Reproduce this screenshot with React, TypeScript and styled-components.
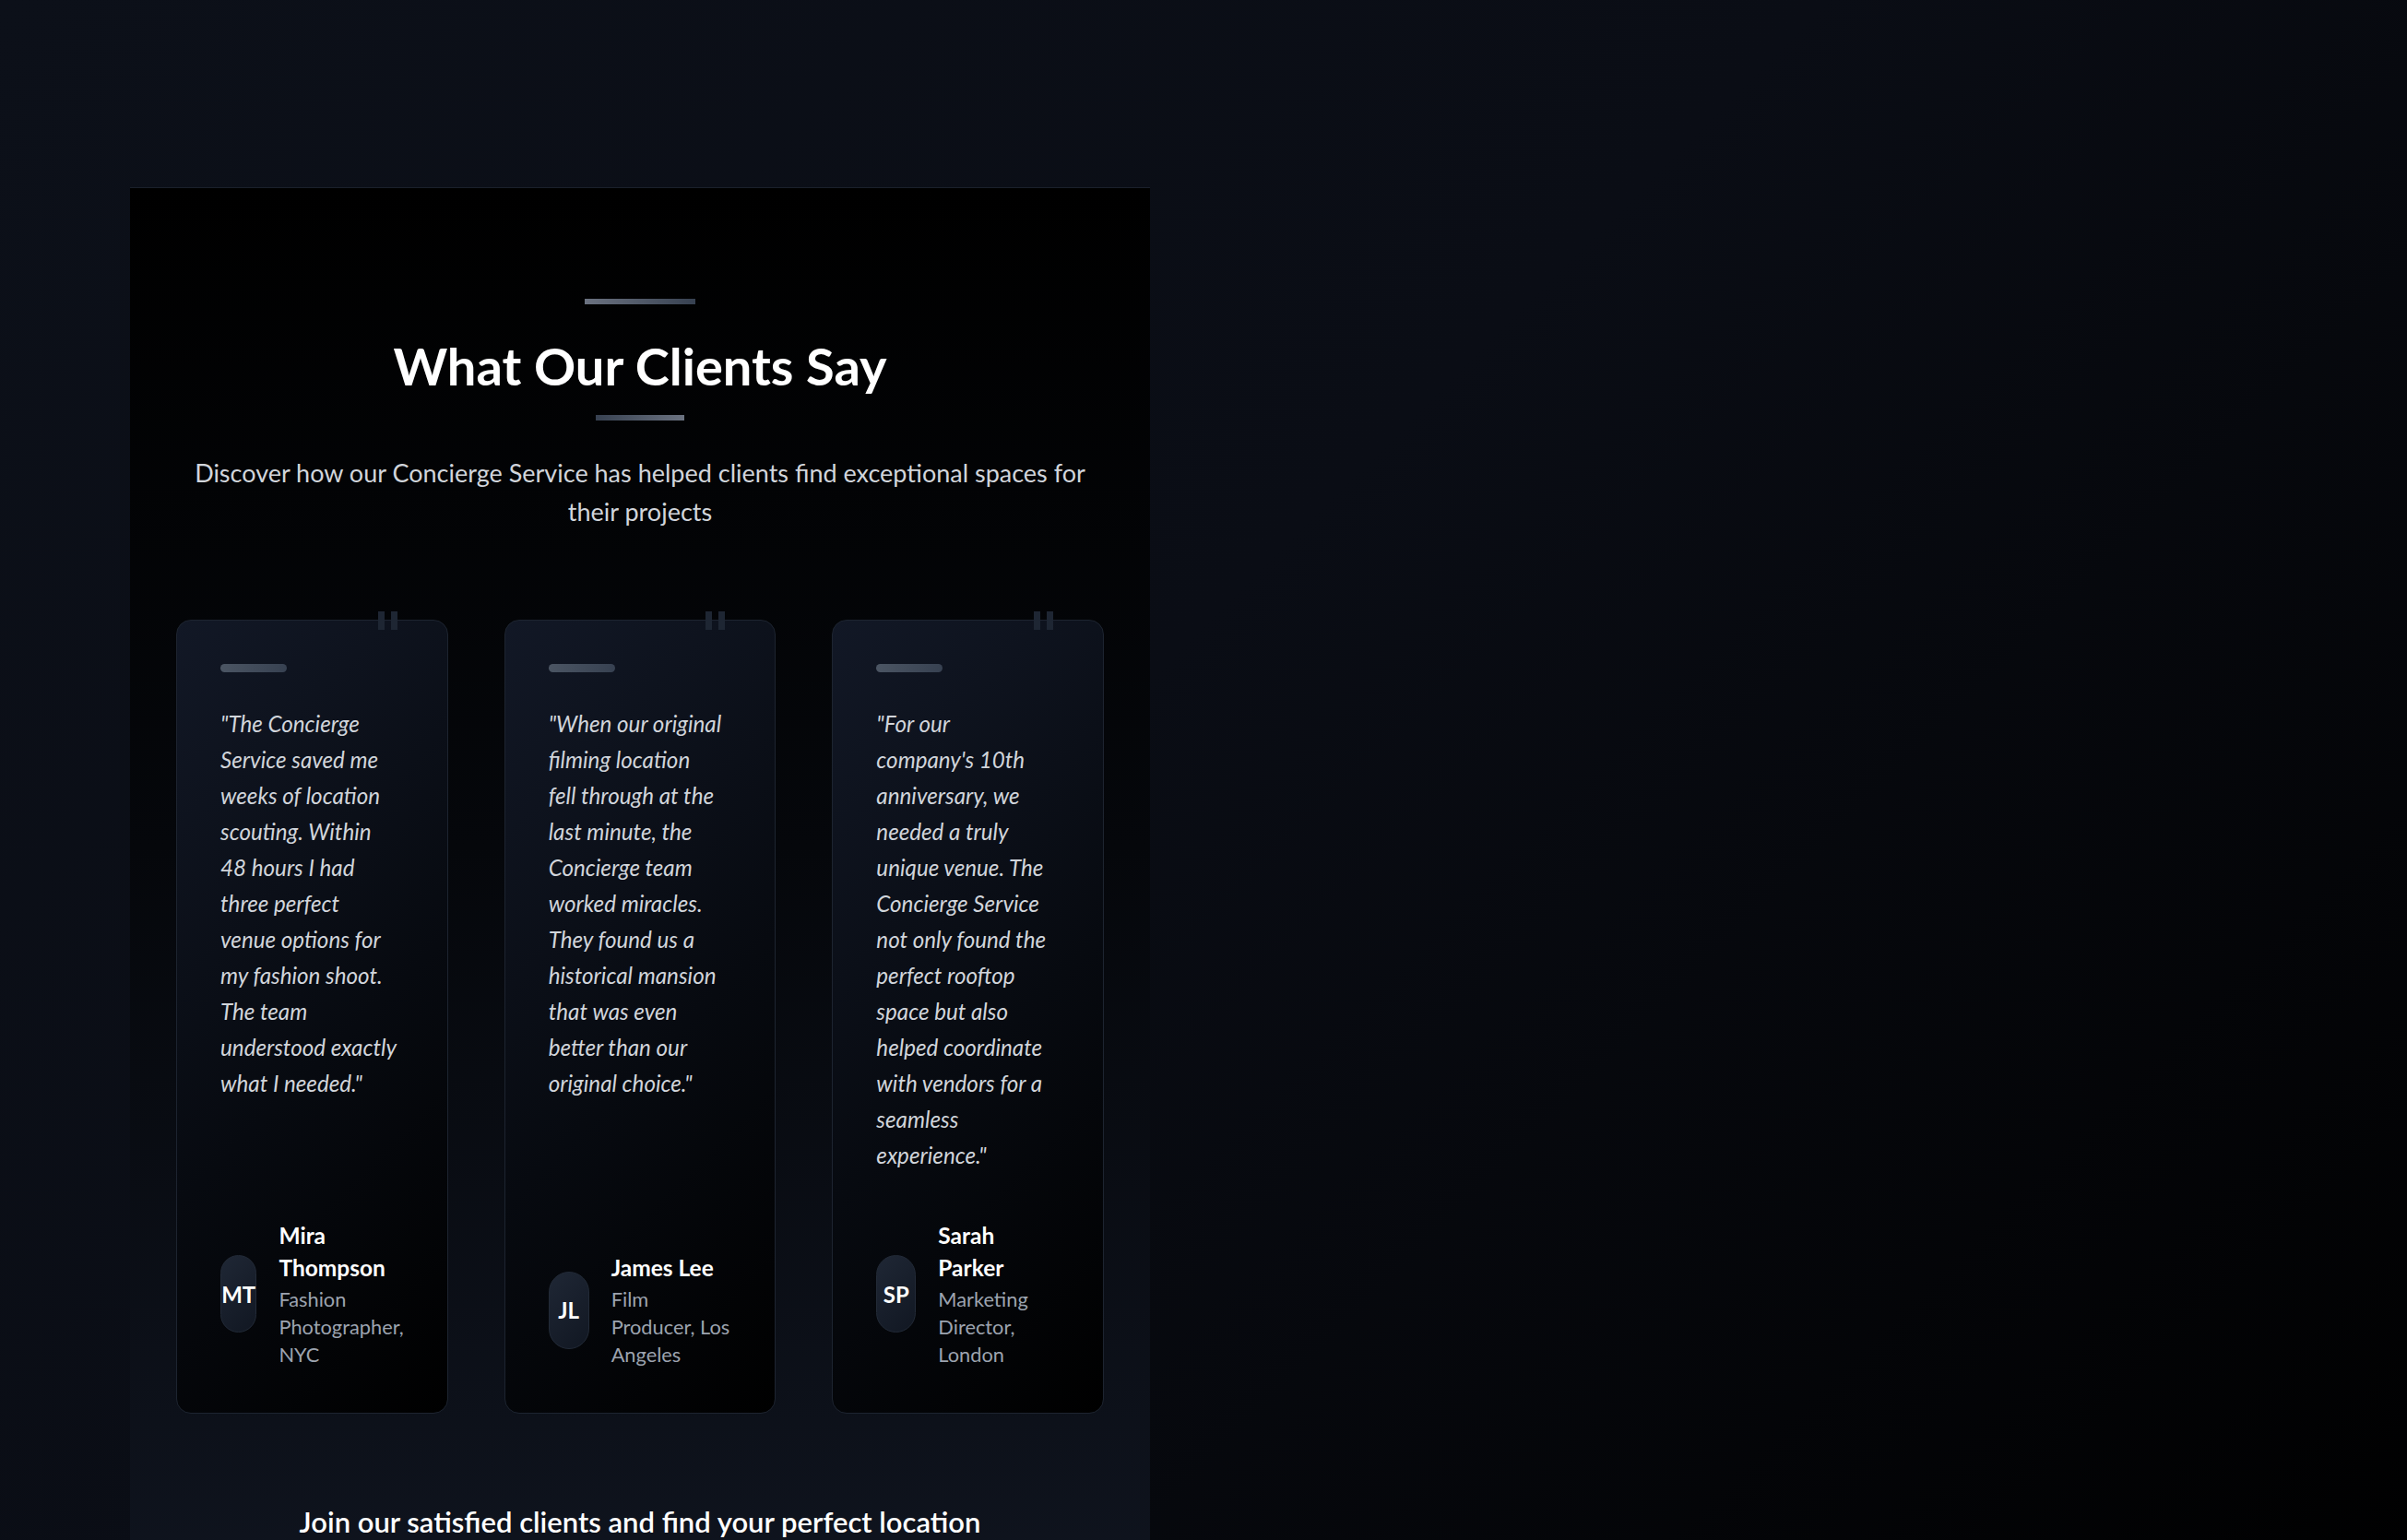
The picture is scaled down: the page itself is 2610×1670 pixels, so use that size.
import React from "react";
import styled, { createGlobalStyle } from "styled-components";

const GlobalStyle = createGlobalStyle`
  *, *::before, *::after { box-sizing: border-box; }
  html, body { margin: 0; padding: 0; }
  body {
    min-height: 100vh;
    background: linear-gradient(135deg, #0c1019 0%, #0a0d15 45%, #000000 100%);
    font-family: "Lato", "Open Sans", "Liberation Sans", sans-serif;
    color: #ffffff;
  }
`;

const Page = styled.div`
  min-height: 100vh;
  padding: 203px 0 0 141px;
`;

const Section = styled.section`
  width: 1106px;
  border-top: 1px solid #1a202b;
  background: linear-gradient(180deg, #000000 0%, #05070b 45%, #101520 100%);
  padding: 120px 50px 120px;
  display: flex;
  flex-direction: column;
  align-items: center;
`;

const Bar = styled.div<{ $w: number; $reverse?: boolean }>`
  width: ${(p) => p.$w}px;
  height: 6px;
  background: ${(p) =>
    p.$reverse
      ? "linear-gradient(90deg, #374151, #6b7280)"
      : "linear-gradient(90deg, #6b7280, #374151)"};
`;

const Heading = styled.h2`
  margin: 34px 0 20px;
  font-size: 56px;
  line-height: 66px;
  font-weight: 700;
  color: #ffffff;
  text-align: center;
`;

const Subtitle = styled.p`
  margin: 36px 0 0;
  max-width: 1000px;
  font-size: 27px;
  line-height: 42px;
  color: #d1d5db;
  text-align: center;
`;

const Grid = styled.div`
  margin-top: 96px;
  width: 100%;
  display: grid;
  grid-template-columns: repeat(3, minmax(0, 1fr));
  gap: 61px;
`;

const Card = styled.article`
  position: relative;
  min-width: 0;
  display: flex;
  flex-direction: column;
  padding: 47px 47px 48px;
  border: 1px solid #1d2430;
  border-radius: 16px;
  background: linear-gradient(135deg, #121826 0%, #070a10 55%, #000000 100%);
`;

const QuoteMark = styled.svg`
  position: absolute;
  top: -10px;
  right: 54px;
  width: 21px;
  height: 20px;
`;

const CardBar = styled.div`
  width: 72px;
  height: 9px;
  border-radius: 9999px;
  background: linear-gradient(90deg, #4b5563, #374151);
`;

const Quote = styled.p`
  margin: 36px 0 0;
  font-size: 24.2px;
  line-height: 39px;
  font-style: italic;
  color: #d1d5db;
`;

const QuoteLine = styled.span`
  display: block;
  white-space: nowrap;
`;

const Author = styled.div`
  margin-top: auto;
  padding-top: 50px;
  display: flex;
  align-items: center;
  gap: 24px;
`;

const Avatar = styled.div`
  width: 84px;
  height: 84px;
  border-radius: 9999px;
  border: 1px solid #222a37;
  background: linear-gradient(135deg, #1f2735 0%, #111722 100%);
  display: flex;
  align-items: center;
  justify-content: center;
  font-size: 24px;
  font-weight: 700;
  color: #ffffff;
`;

const AuthorText = styled.div`
  display: flex;
  flex-direction: column;
`;

const Name = styled.div`
  font-size: 24.5px;
  line-height: 35px;
  font-weight: 700;
  color: #ffffff;
`;

const Role = styled.div`
  margin-top: 2px;
  font-size: 21.8px;
  line-height: 30px;
  color: #9ca3af;
`;

const Join = styled.h3`
  margin: 98px 0 0;
  font-size: 31px;
  line-height: 39px;
  font-weight: 600;
  color: #ffffff;
  text-align: center;
`;

type Testimonial = {
  quote: string[];
  name: string;
  role: string;
  initials: string;
};

const testimonials: Testimonial[] = [
  {
    quote: [
      "\"The Concierge",
      "Service saved me",
      "weeks of location",
      "scouting. Within",
      "48 hours I had",
      "three perfect",
      "venue options for",
      "my fashion shoot.",
      "The team",
      "understood exactly",
      "what I needed.\"",
    ],
    name: "Mira Thompson",
    role: "Fashion Photographer, NYC",
    initials: "MT",
  },
  {
    quote: [
      "\"When our original",
      "filming location",
      "fell through at the",
      "last minute, the",
      "Concierge team",
      "worked miracles.",
      "They found us a",
      "historical mansion",
      "that was even",
      "better than our",
      "original choice.\"",
    ],
    name: "James Lee",
    role: "Film Producer, Los Angeles",
    initials: "JL",
  },
  {
    quote: [
      "\"For our",
      "company's 10th",
      "anniversary, we",
      "needed a truly",
      "unique venue. The",
      "Concierge Service",
      "not only found the",
      "perfect rooftop",
      "space but also",
      "helped coordinate",
      "with vendors for a",
      "seamless",
      "experience.\"",
    ],
    name: "Sarah Parker",
    role: "Marketing Director, London",
    initials: "SP",
  },
];

export default function App() {
  return (
    <>
      <GlobalStyle />
      <Page>
        <Section>
          <Bar $w={120} />
          <Heading>What Our Clients Say</Heading>
          <Bar $w={96} $reverse />
          <Subtitle>
            Discover how our Concierge Service has helped clients find exceptional spaces for their projects
          </Subtitle>
          <Grid>
            {testimonials.map((t) => (
              <Card key={t.name}>
                <QuoteMark viewBox="0 0 21 20" aria-hidden="true">
                  <rect x="0" y="0" width="7" height="20" fill="#1e2633" />
                  <rect x="14" y="0" width="7" height="20" fill="#1e2633" />
                </QuoteMark>
                <CardBar />
                <Quote>
                  {t.quote.map((line, i) => (
                    <QuoteLine key={i}>{line}</QuoteLine>
                  ))}
                </Quote>
                <Author>
                  <Avatar>{t.initials}</Avatar>
                  <AuthorText>
                    <Name>{t.name}</Name>
                    <Role>{t.role}</Role>
                  </AuthorText>
                </Author>
              </Card>
            ))}
          </Grid>
          <Join>Join our satisfied clients and find your perfect location</Join>
        </Section>
      </Page>
    </>
  );
}
